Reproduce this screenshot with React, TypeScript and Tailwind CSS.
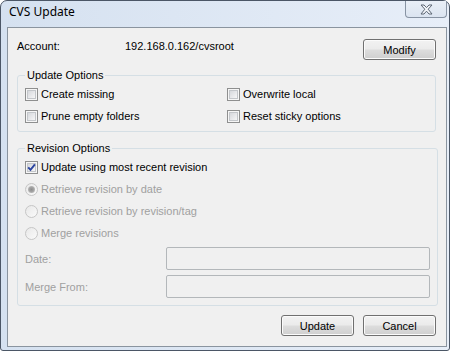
import React from "react";

function Checkbox({ checked = false }: { checked?: boolean }) {
  return (
    <span className="relative flex h-[13px] w-[13px] shrink-0 items-center justify-center border border-[#8e8f8f] bg-[#f6f6f6]">
      <span className="h-[9px] w-[9px] border border-[#c3c6ca] bg-[linear-gradient(135deg,#d6d8dc,#f6f6f7)]" />
      {checked && (
        <svg className="absolute inset-0" width="11" height="11" viewBox="0 0 11 11">
          <path d="M2.2 5.4 L4.5 7.9 L8.9 2.4" fill="none" stroke="#2b44a0" strokeWidth="1.9" />
        </svg>
      )}
    </span>
  );
}

function Radio({ checked = false }: { checked?: boolean }) {
  return (
    <span className="flex h-[13px] w-[13px] shrink-0 items-center justify-center rounded-full border border-[#c6c6c6] bg-[linear-gradient(135deg,#e8e8e8,#fafafa)]">
      {checked && (
        <span className="h-[7px] w-[7px] rounded-full bg-[radial-gradient(circle,#8c8c8c_0%,#a3a3a3_45%,#cfcfcf_100%)]" />
      )}
    </span>
  );
}

function Button({ children }: { children: React.ReactNode }) {
  return (
    <button className="flex h-[21px] w-[73px] shrink-0 items-center justify-center rounded-[3px] border border-[#707070] bg-[linear-gradient(to_bottom,#f2f2f2_0%,#ebebeb_48%,#dddddd_52%,#cfcfcf_100%)] pt-[1px] text-[11px] leading-[13px] text-black shadow-[inset_0_0_0_1px_#fbfbfb]">
      {children}
    </button>
  );
}

function CheckRow({ label, checked }: { label: string; checked?: boolean }) {
  return (
    <div className="flex h-[22px] items-center gap-[3px]">
      <Checkbox checked={checked} />
      <span className="pt-[1px] leading-[13px]">{label}</span>
    </div>
  );
}

function RadioRow({ label, checked }: { label: string; checked?: boolean }) {
  return (
    <div className="flex h-[22px] items-center gap-[3px]">
      <Radio checked={checked} />
      <span className="pt-[1px] leading-[13px] text-[#a0a0a0]">{label}</span>
    </div>
  );
}

function FieldRow({ label }: { label: string }) {
  return (
    <div className="flex h-[23px] items-center">
      <span className="w-[141px] pt-[1px] leading-[13px] text-[#a0a0a0]">{label}</span>
      <div className="h-[23px] w-[264px] rounded-[2px] border border-[#b3b7ba] bg-[#f0f0f0]" />
    </div>
  );
}

export default function App() {
  return (
    <div className="h-[353px] w-[454px] bg-white font-['Liberation_Sans',Arial,sans-serif] text-[11px] text-black">
      <div className="flex h-[351px] w-[450px] flex-col rounded-t-[7px] rounded-b-[3px] border border-[#4b5666] bg-[linear-gradient(to_right,#d5e1f0,#e7eef8)]">
        <div className="flex h-[26px] items-start justify-between">
          <span className="pl-[8px] pt-[3px] font-['Noto_Sans',sans-serif] text-[12px] leading-[16px] text-black">
            CVS Update
          </span>
          <div className="mr-[2px] flex h-[17px] w-[42px] items-center justify-center rounded-b-[4px] border border-t-0 border-[#8793a3] bg-[linear-gradient(to_bottom,#e9eff7,#dbe4f0)]">
            <svg width="13" height="11" viewBox="0 0 13 11">
              <polygon
                points="1,1 4,1 6.5,3.6 9,1 12,1 8.2,5.2 12,10 9,10 6.5,7.2 4,10 1,10 4.8,5.2"
                fill="#f2f5f9"
                stroke="#5d6775"
                strokeWidth="1"
                strokeLinejoin="round"
              />
            </svg>
          </div>
        </div>
        <div className="ml-[6px] mr-[2px] flex h-[320px] w-[440px] flex-col border border-[#8a949f] bg-[#f0f0f0] pl-[9px] pr-[10px] pt-[11px]">
          <div className="flex h-[21px] items-start">
            <span className="w-[108px] pt-[1px] leading-[13px]">Account:</span>
            <span className="pt-[1px] leading-[13px]">192.168.0.162/cvsroot</span>
            <div className="ml-auto">
              <Button>Modify</Button>
            </div>
          </div>

          <fieldset className="mt-[9px] rounded-[3px] border border-[#d5dfe5] px-[7px] pb-[4px] pt-[1px]">
            <legend className="px-[2px] leading-[13px]">Update Options</legend>
            <div className="grid grid-cols-[202px_1fr]">
              <CheckRow label="Create missing" />
              <CheckRow label="Overwrite local" />
              <CheckRow label="Prune empty folders" />
              <CheckRow label="Reset sticky options" />
            </div>
          </fieldset>

          <fieldset className="mt-[10px] rounded-[3px] border border-[#d5dfe5] px-[7px] pb-[7px] pt-[1px]">
            <legend className="px-[2px] leading-[13px]">Revision Options</legend>
            <CheckRow label="Update using most recent revision" checked />
            <RadioRow label="Retrieve revision by date" checked />
            <RadioRow label="Retrieve revision by revision/tag" />
            <RadioRow label="Merge revisions" />
            <div className="mt-[3px] flex flex-col gap-[5px]">
              <FieldRow label="Date:" />
              <FieldRow label="Merge From:" />
            </div>
          </fieldset>

          <div className="mt-[9px] flex justify-end gap-[9px]">
            <Button>Update</Button>
            <Button>Cancel</Button>
          </div>
        </div>
      </div>
    </div>
  );
}
